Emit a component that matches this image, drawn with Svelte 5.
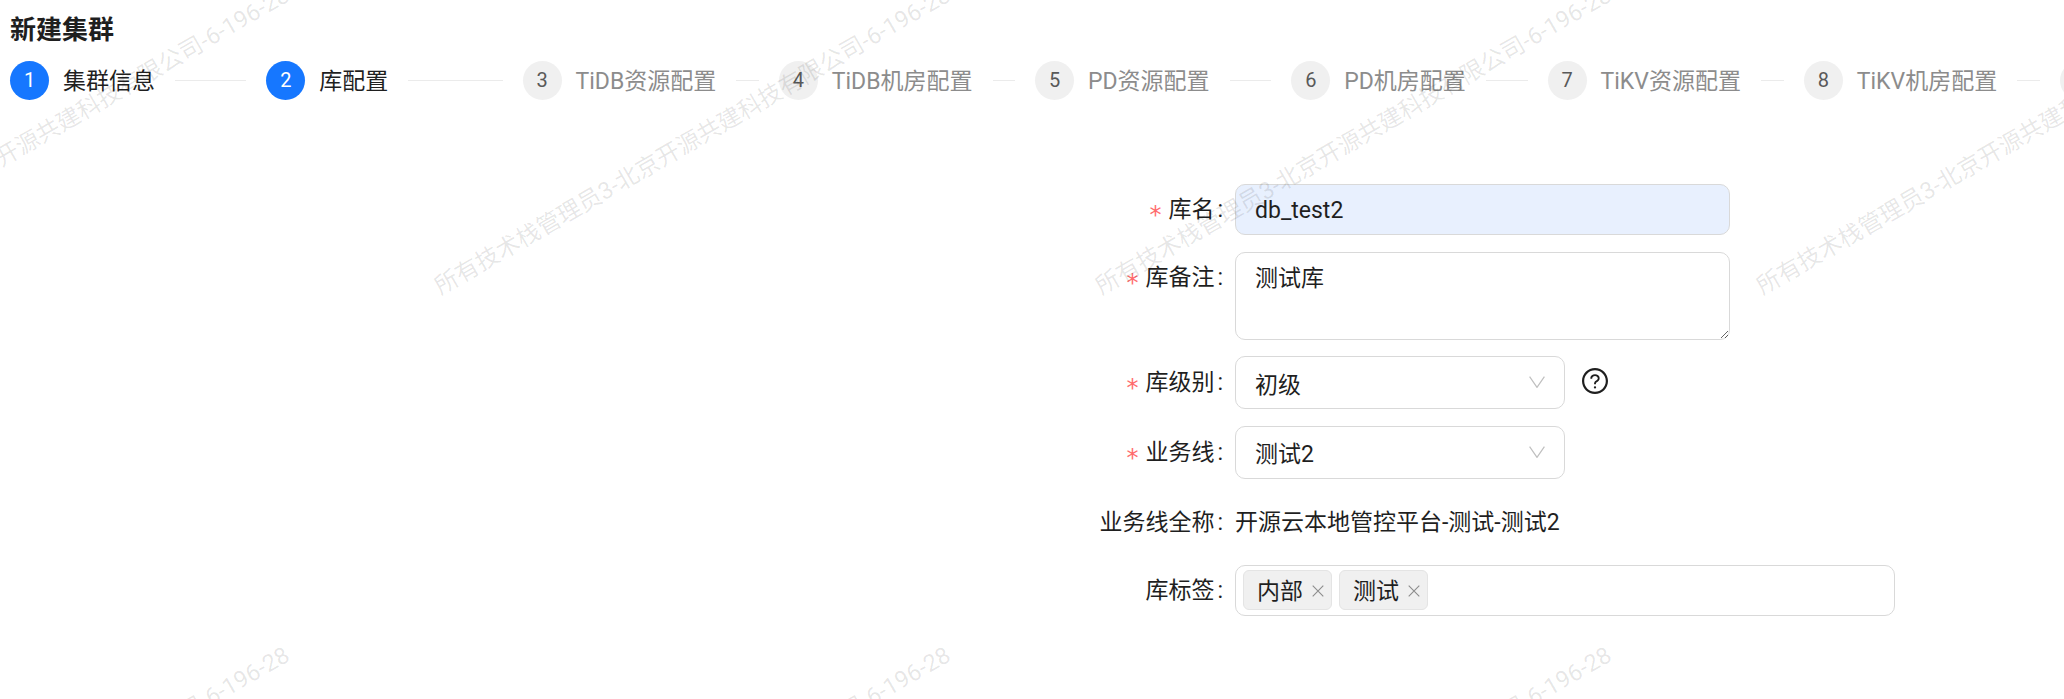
<script>
    const steps = ['集群信息', '库配置', 'TiDB资源配置', 'TiDB机房配置', 'PD资源配置', 'PD机房配置', 'TiKV资源配置', 'TiKV机房配置', ''];
    const current = 2;
    const mark = '所有技术栈管理员3-北京开源共建科技有限公司-6-196-28';
    const marks = Array(8).fill(mark);
    const tags = ['内部', '测试'];
</script>

<div class="page">
    <h1 class="title">新建集群</h1>

    <div class="steps">
        {#each steps as step, i}
            <div class="step" class:done={i < current}>
                <span class="num">{i + 1}</span>
                {#if step}
                    <span class="name">{step}</span>
                    <span class="line"></span>
                {/if}
            </div>
        {/each}
    </div>

    <form class="form">
        <div class="row h51">
            <label class="label req" for="db-name">库名</label>
            <input id="db-name" class="box input" value="db_test2" />
        </div>
        <div class="row">
            <label class="label req" for="db-note">库备注</label>
            <textarea id="db-note" class="box textarea">测试库</textarea>
        </div>
        <div class="row h53">
            <span class="label req">库级别</span>
            <div class="box select">
                <span>初级</span>
                <svg class="chevron" viewBox="0 0 16 12"><path d="M.6.6 8 11.4 15.4.6" /></svg>
            </div>
            <svg class="help" viewBox="64 64 896 896">
                <path d="M512 64C264.6 64 64 264.6 64 512s200.6 448 448 448 448-200.6 448-448S759.4 64 512 64zm0 820c-205.4 0-372-166.6-372-372s166.6-372 372-372 372 166.6 372 372-166.6 372-372 372z" />
                <path d="M623.6 316.7C593.6 290.4 554 276 512 276s-81.6 14.5-111.6 40.7C369.2 344 352 380.7 352 420v7.6c0 4.4 3.6 8 8 8h48c4.4 0 8-3.6 8-8V420c0-44.1 43.1-80 96-80s96 35.9 96 80c0 31.1-22 59.6-56.1 72.7-21.2 8.1-39.2 22.3-52.1 40.9-13.1 19-19.9 41.8-19.9 64.9V620c0 4.4 3.6 8 8 8h48c4.4 0 8-3.6 8-8v-22.7a48.3 48.3 0 0 1 30.9-44.8c59-22.7 97.1-74.7 97.1-132.5.1-39.3-17.1-76-48.3-103.3zM472 732a40 40 0 1 0 80 0 40 40 0 1 0-80 0z" />
            </svg>
        </div>
        <div class="row h53">
            <span class="label req">业务线</span>
            <div class="box select">
                <span>测试2</span>
                <svg class="chevron" viewBox="0 0 16 12"><path d="M.6.6 8 11.4 15.4.6" /></svg>
            </div>
        </div>
        <div class="row plain">
            <span class="label">业务线全称</span>
            <span class="value">开源云本地管控平台-测试-测试2</span>
        </div>
        <div class="row h51">
            <span class="label">库标签</span>
            <div class="box tags">
                {#each tags as tag}
                    <span class="tag">
                        {tag}
                        <svg class="close" viewBox="0 0 12 12"><path d="M.7.7l10.6 10.6M11.3.7.7 11.3" /></svg>
                    </span>
                {/each}
            </div>
        </div>
    </form>

    <div class="watermarks">
        {#each marks as text}
            <div class="cell"><span>{text}</span></div>
        {/each}
    </div>
</div>

<style>
    :global(body) {
        background: #fff;
    }

    .page {
        position: relative;
        height: 699px;
        padding: 10px 0 0 10px;
        box-sizing: border-box;
        overflow: hidden;
        color: #1f1f1f;
        font-family: Roboto, "Noto Sans CJK SC", sans-serif;
        font-size: 23px;
    }

    .title {
        margin: 0;
        font-size: 26px;
        line-height: 40px;
        font-weight: 700;
    }

    .steps {
        display: flex;
        height: 39px;
        margin-top: 11px;
    }

    .step {
        flex: 0 0 256.25px;
        display: flex;
        align-items: center;
        color: #8c8c8c;
    }

    .num {
        flex: none;
        width: 39px;
        height: 39px;
        border-radius: 50%;
        background: #f0f0f0;
        color: #595959;
        font-size: 20px;
        line-height: 39px;
        text-align: center;
    }

    .done {
        color: #1f1f1f;
    }

    .done .num {
        background: #1677ff;
        color: #fff;
    }

    .name {
        margin-left: 14px;
        padding-top: 2px;
        white-space: nowrap;
        line-height: 37px;
    }

    .line {
        flex: 1;
        height: 1px;
        margin: 0 20px;
        background: #ebebeb;
    }

    .form {
        margin: 84px 0 0 0;
    }

    .row {
        display: flex;
        align-items: flex-start;
        margin-bottom: 16.5px;
    }

    .h51 {
        height: 51px;
    }

    .h53 {
        height: 53px;
    }

    .plain {
        height: 53px;
        margin-top: 18px;
        margin-bottom: 15px;
    }

    .label {
        flex: none;
        width: 1225px;
        padding-right: 12px;
        box-sizing: border-box;
        line-height: 51px;
        text-align: right;
        white-space: nowrap;
    }

    .h53 .label,
    .plain .value {
        line-height: 53px;
    }

    .plain .label,
    .plain .value {
        line-height: 51px;
    }

    .label::after {
        content: ":";
        margin-left: 3px;
    }

    .req::before {
        content: "*";
        display: inline-block;
        margin-right: 7px;
        color: #ff6b6d;
        font-family: "DejaVu Sans", sans-serif;
        font-size: 24px;
        line-height: 1;
        vertical-align: -6px;
    }

    .box {
        box-sizing: border-box;
        border: 1px solid #d9d9d9;
        border-radius: 10px;
        background: #fff;
        color: #1f1f1f;
        font: inherit;
    }

    .input {
        display: block;
        width: 495px;
        height: 51px;
        padding: 2px 19px 0;
        background: #e8f0fe;
        outline: none;
    }

    .textarea {
        display: block;
        width: 495px;
        height: 88px;
        padding: 8px 19px 4px;
        line-height: 36px;
        outline: none;
    }

    .select {
        display: flex;
        align-items: center;
        justify-content: space-between;
        width: 330px;
        height: 53px;
        padding: 0 19px 0 19px;
    }

    .chevron {
        width: 16px;
        height: 12px;
        margin-top: -1px;
        fill: none;
        stroke: #bfbfbf;
        stroke-width: 1.2;
    }

    .help {
        width: 26px;
        height: 26px;
        margin: 12px 0 0 17px;
        fill: #1f1f1f;
    }

    .tags {
        display: flex;
        align-items: center;
        gap: 7px;
        width: 660px;
        height: 51px;
        padding: 0 7px;
    }

    .tag {
        display: flex;
        align-items: center;
        gap: 9px;
        box-sizing: border-box;
        height: 40px;
        padding: 0 7px 2px 13px;
        border: 1px solid #e4e4e4;
        border-radius: 6px;
        background: #f0f0f0;
    }

    .close {
        width: 12px;
        height: 12px;
        margin-top: 4px;
        fill: none;
        stroke: #8c8c8c;
        stroke-width: 1.1;
    }

    .watermarks {
        position: absolute;
        left: -216px;
        top: 303px;
        display: grid;
        grid-template-columns: repeat(4, 661px);
        grid-auto-rows: 660px;
        pointer-events: none;
    }

    .cell {
        height: 0;
    }

    .cell span {
        display: block;
        width: 700px;
        transform: rotate(-30deg) translateY(-34px);
        transform-origin: 0 0;
        color: rgba(0, 0, 0, 0.1);
        font-size: 23.6px;
        line-height: 34px;
        white-space: nowrap;
    }
</style>
